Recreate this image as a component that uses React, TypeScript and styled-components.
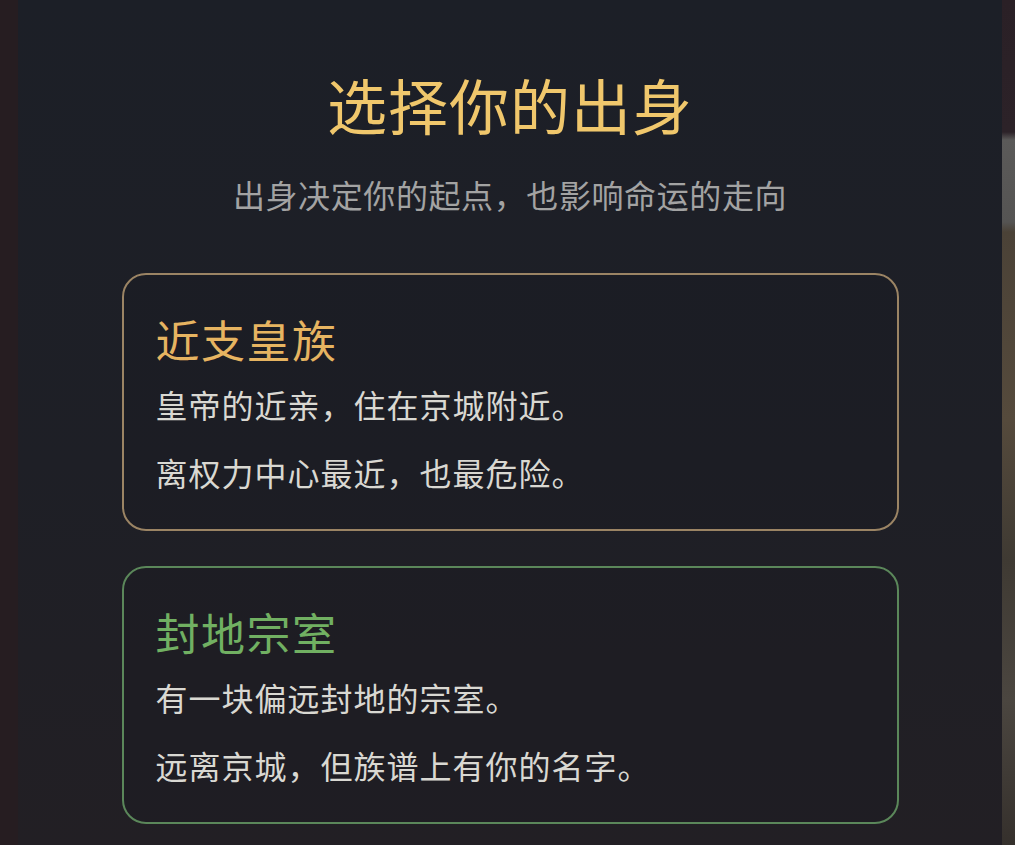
import React from "react";
import styled, { createGlobalStyle } from "styled-components";

type Tone = "gold" | "green";

interface Origin {
  id: string;
  name: string;
  tone: Tone;
  lines: string[];
}

const origins: Origin[] = [
  {
    id: "royal",
    name: "近支皇族",
    tone: "gold",
    lines: ["皇帝的近亲，住在京城附近。", "离权力中心最近，也最危险。"],
  },
  {
    id: "fief",
    name: "封地宗室",
    tone: "green",
    lines: ["有一块偏远封地的宗室。", "远离京城，但族谱上有你的名字。"],
  },
];

const toneColors: Record<Tone, { text: string; border: string }> = {
  gold: { text: "#e6b461", border: "#9b8464" },
  green: { text: "#71b062", border: "#5b875a" },
};

const GlobalStyle = createGlobalStyle`
  html, body {
    margin: 0;
    padding: 0;
    background: #261d21;
    font-family: "Noto Sans CJK SC", "Noto Sans", sans-serif;
  }
`;

const Page = styled.div`
  display: flex;
  min-height: 100vh;
  padding-left: 18px;
  background: #261d21;
`;

const Panel = styled.main`
  flex: 1;
  display: flex;
  flex-direction: column;
  align-items: center;
  padding-top: 68px;
  background: linear-gradient(180deg, #1c1f27 0%, #1e1f26 55%, #221f24 100%);
`;

/* sliver of the scene behind the dialog, visible on the right edge */
const Backdrop = styled.div`
  width: 13px;
  flex-shrink: 0;
  background: linear-gradient(
    180deg,
    #2a2026 0px,
    #2c2228 132px,
    #5b5a59 140px,
    #555453 222px,
    #4b4237 232px,
    #554a3c 420px,
    #3f3a33 560px,
    #4b4640 700px,
    #35302c 845px
  );
`;

const Title = styled.h1`
  margin: 0;
  font-size: 60px;
  line-height: 72px;
  font-weight: 400;
  letter-spacing: 1px;
  color: #f0c76c;
`;

const Subtitle = styled.p`
  margin: 32px 0 0;
  font-size: 32px;
  line-height: 44px;
  letter-spacing: 0.6px;
  color: #a3a3a3;
`;

const CardList = styled.div`
  display: flex;
  flex-direction: column;
  gap: 35px;
  width: 777px;
  margin-top: 57px;
`;

const Card = styled.section<{ $tone: Tone }>`
  display: flex;
  flex-direction: column;
  gap: 24px;
  padding: 36px 32px 35px;
  border: 2px solid ${(p) => toneColors[p.$tone].border};
  border-radius: 24px;
  background: rgba(22, 22, 30, 0.25);
`;

const CardTitle = styled.h2<{ $tone: Tone }>`
  margin: 0 0 -9px;
  font-size: 44px;
  line-height: 56px;
  font-weight: 400;
  letter-spacing: 1.5px;
  color: ${(p) => toneColors[p.$tone].text};
`;

const Line = styled.p`
  margin: 0;
  font-size: 32px;
  line-height: 44px;
  letter-spacing: 1px;
  color: #d9d8d2;
`;

const App: React.FC = () => {
  return (
    <>
      <GlobalStyle />
      <Page>
        <Panel>
          <Title>选择你的出身</Title>
          <Subtitle>出身决定你的起点，也影响命运的走向</Subtitle>
          <CardList>
            {origins.map((o) => (
              <Card key={o.id} $tone={o.tone}>
                <CardTitle $tone={o.tone}>{o.name}</CardTitle>
                {o.lines.map((l) => (
                  <Line key={l}>{l}</Line>
                ))}
              </Card>
            ))}
          </CardList>
        </Panel>
        <Backdrop />
      </Page>
    </>
  );
};

export default App;
